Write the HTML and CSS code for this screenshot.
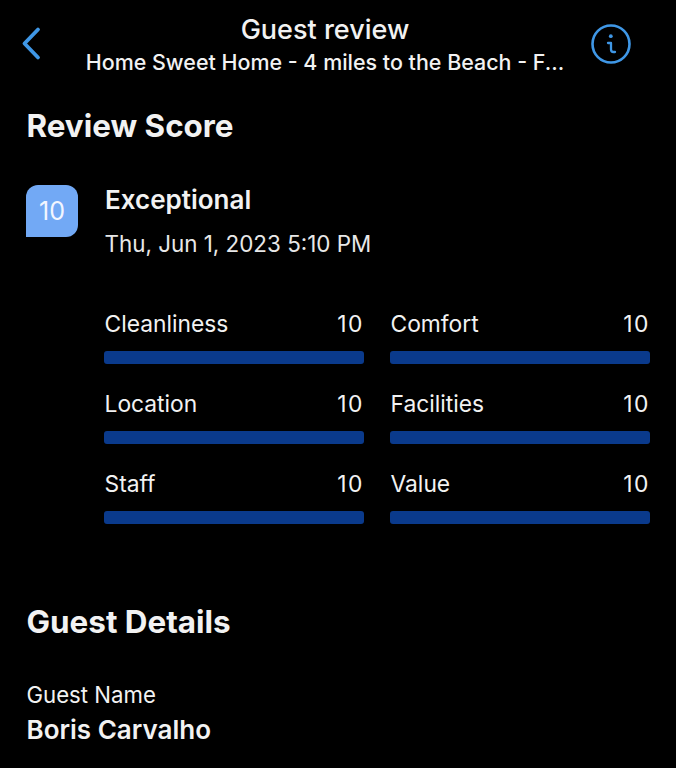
FILE: index.html
```html
<!DOCTYPE html>
<html lang="en">
<head>
<meta charset="utf-8">
<title>Guest review</title>
<link rel="stylesheet" href="styles.css">
</head>
<body>
<header class="nav">
  <svg class="back" width="24" height="36" viewBox="0 0 24 36"><path d="M18 3.500 4.500 17.500 18 31.500" fill="none" stroke="#3F97E6" stroke-width="3.800" stroke-linecap="round" stroke-linejoin="round"/></svg>
  <div class="nav-titles">
    <div class="nav-title">Guest review</div>
    <div class="nav-sub">Home Sweet Home - 4 miles to the Beach - F...</div>
  </div>
  <svg class="info" width="40" height="40" viewBox="0 0 40 40"><circle cx="20" cy="20" r="18.500" fill="none" stroke="#3F97E6" stroke-width="2.600"/><circle cx="19.800" cy="12.200" r="1.900" fill="#3F97E6"/><path d="M17 19h3v6.500q0 2.500 2.500 2.500h1.500" fill="none" stroke="#3F97E6" stroke-width="2.300" stroke-linecap="round" stroke-linejoin="round"/></svg>
</header>
<main>
  <h2 class="h-score">Review Score</h2>
  <section class="summary">
    <div class="badge">10</div>
    <div>
      <div class="rating">Exceptional</div>
      <div class="date">Thu, Jun 1, 2023 5:10 PM</div>
    </div>
  </section>
  <section class="grid">
    <div class="item"><div class="row"><span>Cleanliness</span><span class="val">10</span></div><div class="bar"></div></div>
    <div class="item"><div class="row"><span>Comfort</span><span class="val">10</span></div><div class="bar"></div></div>
    <div class="item"><div class="row"><span>Location</span><span class="val">10</span></div><div class="bar"></div></div>
    <div class="item"><div class="row"><span>Facilities</span><span class="val">10</span></div><div class="bar"></div></div>
    <div class="item"><div class="row"><span>Staff</span><span class="val">10</span></div><div class="bar"></div></div>
    <div class="item"><div class="row"><span>Value</span><span class="val">10</span></div><div class="bar"></div></div>
  </section>
  <h2 class="h-guest">Guest Details</h2>
  <div class="label">Guest Name</div>
  <div class="name">Boris Carvalho</div>
</main>
</body>
</html>
```
FILE: styles.css
```css
* { box-sizing: border-box; }
html, body { margin: 0; height: 100%; }
body {
  background: #000;
  color: #f2f2f2;
  font-family: Inter, "Liberation Sans", sans-serif;
  overflow: hidden;
}
.nav {
  display: flex;
  align-items: flex-start;
  padding: 14px 45px 0 20px;
  height: 100px;
}
.back { margin-top: 12px; flex: none; }
.info { margin-top: 10px; flex: none; }
.nav-titles { flex: 1; text-align: center; padding-left: 15px; min-width: 0; }
.nav-title { font-size: 27px; font-weight: 500; line-height: 32px; }
.nav-sub { font-size: 21.450px; font-weight: 500; line-height: 33px; white-space: nowrap; }
main { padding: 0 26px 0 26.500px; }
h2 { margin: 0; font-size: 31.400px; font-weight: 700; line-height: 40px; }
.h-score { margin-top: 6px; }
.summary { display: flex; gap: 27px; margin-top: 39px; margin-left: -0.500px; }
.badge {
  width: 52px; height: 52px;
  background: #72A9F5;
  border-radius: 12px 12px 12px 0;
  display: flex; align-items: center; justify-content: center;
  font-size: 25px; color: #f2f6ff;
}
.rating { font-size: 26px; font-weight: 600; line-height: 32px; margin-top: -1px; }
.date { font-size: 22.400px; line-height: 30px; margin-top: 13px; color: #e8e8e8; margin-left: -0.500px; }
.grid {
  display: grid;
  grid-template-columns: 260px 260px;
  column-gap: 26px;
  row-gap: 25px;
  margin: 50px 0 0 77.500px;
}
.row { display: flex; justify-content: space-between; font-size: 22.800px; line-height: 30px; padding: 0 0 0 0.500px; }
.val { letter-spacing: 1.500px; }
.bar { height: 13px; margin-top: 12px; background: #0A3A8C; border-radius: 3px; }
.h-guest { margin-top: 78px; }
.label { font-size: 22.200px; line-height: 28px; margin-top: 39px; }
.name { font-size: 26px; font-weight: 600; line-height: 32px; margin-top: 5px; }
```
